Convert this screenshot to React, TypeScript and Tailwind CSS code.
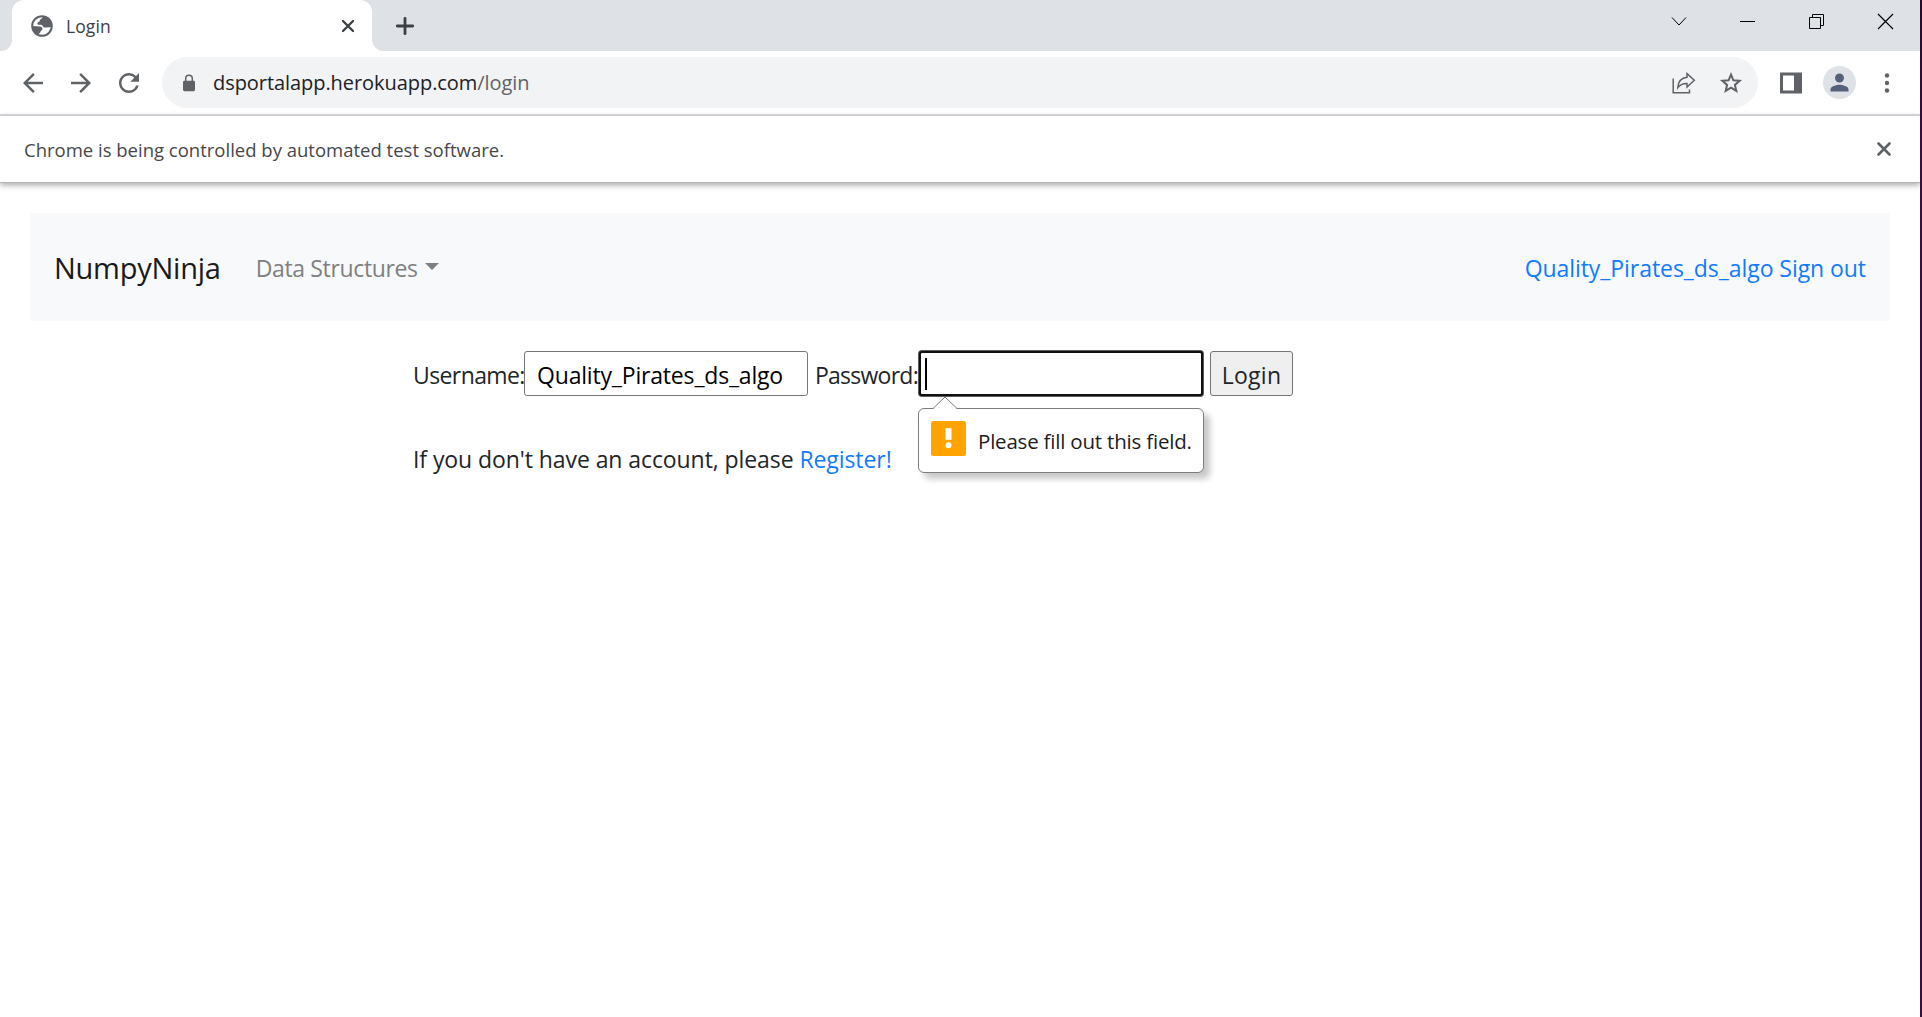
import type { ReactNode } from "react";
import { MdArrowBack, MdArrowForward, MdPerson, MdRefresh } from "react-icons/md";

function GlobeIcon() {
  return (
    <svg width="22" height="22" viewBox="0 0 22 22" className="shrink-0">
      <circle cx="11" cy="11" r="9.8" fill="#fff" stroke="#5f6368" strokeWidth="2" />
      <path
        d="M12 1.5 C11.5 3.5 9 4 8.8 5.6 C8.6 7.4 6.2 7 6.4 8.8 C6.5 10 8.5 9.7 10 9.8 C12 10 11.6 12.2 13.2 12.4 C15 12.6 17 12.4 20.6 12 C21.4 6 17.5 2 12 1.5 Z"
        fill="#5f6368"
      />
      <path
        d="M1.2 11 L8.6 11.4 C11 11.6 11.8 13 11.4 14.4 C11.2 15.4 9.8 15.2 9.6 16.6 C9.4 17.8 8.4 18 7.6 19.8 C3.5 18.4 1.2 15 1.2 11 Z"
        fill="#5f6368"
      />
    </svg>
  );
}

function LockIcon() {
  return (
    <svg width="18" height="18" viewBox="0 0 18 18" className="shrink-0">
      <rect x="3" y="6.8" width="12" height="10.4" rx="1.4" fill="#5f6368" />
      <path d="M5.7 7.5V4.6a3.3 3.3 0 0 1 6.6 0v2.9" fill="none" stroke="#5f6368" strokeWidth="1.5" />
    </svg>
  );
}

function ShareIcon() {
  return (
    <svg width="24" height="24" viewBox="0 0 24 24" fill="none" stroke="#5f6368" strokeWidth="1.5" className="shrink-0">
      <path d="M1.2 7.5V21.8H17.5V18.5" />
      <path d="M15 2.6L22.3 9.3L15 16V12.4C11 12.2 8.2 13.2 5.8 16.6C6.2 11 9 6.8 15 6.2Z" strokeLinejoin="miter" />
    </svg>
  );
}

function StarIcon() {
  return (
    <svg width="26" height="26" viewBox="0 0 26 26" fill="none" stroke="#5f6368" strokeWidth="2" className="ml-[22px] shrink-0">
      <path d="M13 4.6L15.4 10.3L21.6 10.8L16.9 14.9L18.3 20.9L13 17.7L7.7 20.9L9.1 14.9L4.4 10.8L10.6 10.3Z" />
    </svg>
  );
}

function SidePanelIcon() {
  return (
    <svg width="30" height="30" viewBox="0 0 30 30" className="shrink-0">
      <path fillRule="evenodd" d="M4 4.5H26V25.5H4ZM7 7.5V22.5H18V7.5Z" fill="#5f6368" />
    </svg>
  );
}

function MenuDots() {
  return (
    <svg width="30" height="30" viewBox="0 0 30 30" fill="#5f6368" className="shrink-0">
      <circle cx="15" cy="7.5" r="2.2" />
      <circle cx="15" cy="15" r="2.2" />
      <circle cx="15" cy="22.5" r="2.2" />
    </svg>
  );
}

function WindowButton({ children }: { children: ReactNode }) {
  return (
    <div className="flex h-[43px] w-[69px] items-center justify-center">
      <svg width="17" height="17" viewBox="0 0 17 17" fill="none" stroke="#000" strokeWidth="1">
        {children}
      </svg>
    </div>
  );
}

function TitleBar() {
  return (
    <div className="flex h-[51px] bg-[#dee1e6]">
      <div className="w-3 bg-white">
        <div className="h-full rounded-br-[11px] bg-[#dee1e6]" />
      </div>
      <div className="bg-[#dee1e6]">
        <div className="flex h-full w-[360px] items-center rounded-t-[12px] bg-white pr-3.5 pl-[19px]">
          <GlobeIcon />
          <span className="ml-[13px] flex-1 text-[17.5px] leading-6 tracking-[0.1px] text-[#3c4043]">Login</span>
          <svg width="20" height="20" viewBox="0 0 20 20" stroke="#3c4043" strokeWidth="2.3" strokeLinecap="round">
            <path d="M5 5L15 15M15 5L5 15" />
          </svg>
        </div>
      </div>
      <div className="flex-1 bg-white">
        <div className="flex h-full rounded-bl-[12px] bg-[#dee1e6]">
          <div className="flex w-[66px] items-center justify-center">
            <svg width="20" height="20" viewBox="0 0 20 20" stroke="#3c4043" strokeWidth="2.8" strokeLinecap="round">
              <path d="M10 2.3V17.7M2.3 10H17.7" />
            </svg>
          </div>
          <div className="ml-auto flex">
            <WindowButton>
              <path d="M2 4.5L9 12L16 4.5" />
            </WindowButton>
            <WindowButton>
              <path d="M1 8.5H16" />
            </WindowButton>
            <WindowButton>
              <path d="M1.5 4.5H12.5V15.5H1.5ZM4.5 4.5V1.5H15.5V12.5H12.5" />
            </WindowButton>
            <WindowButton>
              <path d="M1 1L16 16M16 1L1 16" strokeWidth="1.2" />
            </WindowButton>
          </div>
        </div>
      </div>
    </div>
  );
}

function Toolbar() {
  return (
    <div className="flex h-[65px] items-center gap-[18px] border-b-2 border-[#dadce0] bg-white px-[18px] text-[#5f6368]">
      <MdArrowBack size={30} className="shrink-0" />
      <MdArrowForward size={30} className="shrink-0" />
      <MdRefresh size={30} className="shrink-0" />
      <div className="flex h-[51px] flex-1 items-center rounded-full bg-[#f1f3f4] pr-3.5 pl-[18px]">
        <LockIcon />
        <span className="ml-[15px] flex-1 text-[20px] leading-7 tracking-[-0.06px] text-[#5f6368]">
          <span className="text-[#202124]">dsportalapp.herokuapp.com</span>/login
        </span>
        <ShareIcon />
        <StarIcon />
      </div>
      <SidePanelIcon />
      <div className="flex size-[30px] shrink-0 items-center justify-center">
        <div className="flex size-[33px] shrink-0 items-center justify-center rounded-full bg-[#dee1e6]">
          <MdPerson size={27} color="#55607a" />
        </div>
      </div>
      <MenuDots />
    </div>
  );
}

function InfoBar() {
  return (
    <div className="flex h-[67px] items-center border-b border-[#b4b6b6] bg-white px-6 shadow-[0_2px_6px_rgba(0,0,0,0.35)]">
      <span className="flex-1 pt-0.5 text-[18.5px] leading-6 text-[#46474a]">
        Chrome is being controlled by automated test software.
      </span>
      <svg width="24" height="24" viewBox="0 0 24 24" stroke="#5f6368" strokeWidth="2.6" strokeLinecap="round">
        <path d="M6.5 6.5L17.5 17.5M17.5 6.5L6.5 17.5" />
      </svg>
    </div>
  );
}

function ValidationBubble() {
  return (
    <div className="absolute top-[55px] -left-[3px] h-[65px] w-[286px] rounded-[6px] border border-[#7d7d7d] bg-white shadow-[6px_6px_6px_rgba(0,0,0,0.22)]">
      <svg width="26" height="14" viewBox="0 0 26 14" className="absolute -top-[13px] left-[13px]">
        <path d="M1 13L13 1L25 13V14H1Z" fill="#fff" />
        <path d="M1 12.5L13 1L25 12.5" fill="none" stroke="#7d7d7d" />
      </svg>
      <div className="flex h-full items-center pl-3">
        <svg width="35" height="35" viewBox="0 0 35 35" className="-mt-[5px] shrink-0">
          <rect width="35" height="35" rx="2.5" fill="#ffa300" />
          <rect x="14.5" y="7.2" width="6" height="11.6" fill="#fff" />
          <circle cx="17.5" cy="24.2" r="3" fill="#fff" />
        </svg>
        <span className="ml-3 text-[20.5px] leading-7 tracking-[-0.2px] whitespace-nowrap text-[#1c1c1c]">
          Please fill out this field.
        </span>
      </div>
    </div>
  );
}

function Page() {
  return (
    <main className="px-[30px] pt-[30px]">
      <nav className="flex h-[108px] items-center bg-[#f8f9fb] px-6 pt-0.5 text-[23px]">
        <span className="text-[29px] tracking-[-0.25px] text-[#1a1a1a]">NumpyNinja</span>
        <span className="ml-[35px] flex items-center pt-px tracking-[-0.35px] text-[#7f8080]">
          Data Structures
          <span className="-mt-1 ml-[7px] border-x-[7px] border-t-[7px] border-x-transparent border-t-[#7f8080]" />
        </span>
        <span className="ml-auto pt-px tracking-[-0.06px] text-[#107bff]">Quality_Pirates_ds_algo Sign out</span>
      </nav>
      <div className="mt-[30px] ml-[382px] text-[23px] leading-9 whitespace-nowrap text-[#212529]">
        <div className="flex h-[45px] items-center">
          <label className="w-28 pt-[3px] pl-px tracking-[-0.6px]">Username:</label>
          <div className="flex h-[45px] w-[284px] items-center rounded-[3px] border border-[#767676] bg-white pt-[3px] pl-3 tracking-[-0.18px] text-black">
            Quality_Pirates_ds_algo
          </div>
          <label className="ml-[7px] w-[104px] pt-[3px] tracking-[-0.75px]">Password:</label>
          <div className="relative h-[45px] w-[284px] rounded-[3px] border-2 border-[#101010] bg-white shadow-[0_0_0_1px_#5c5c5c]">
            <div className="mt-[5px] ml-1 h-8 w-0.5 bg-black" />
            <ValidationBubble />
          </div>
          <button className="ml-[7px] h-[45px] w-[83px] rounded-[3px] border border-[#767676] bg-[#efefef] pt-[3px] tracking-[0.3px]">
            Login
          </button>
        </div>
        <p className="mt-[45px] pl-px">
          <span className="tracking-[-0.08px]">If you don't have an account, please </span>
          <a className="tracking-[-0.08px] text-[#107bff]">Register!</a>
        </p>
      </div>
    </main>
  );
}

export default function App() {
  return (
    <div className="flex h-[1017px] w-[1922px] overflow-hidden bg-white font-['Open_Sans',sans-serif]">
      <div className="w-[1920px] shrink-0">
        <TitleBar />
        <Toolbar />
        <InfoBar />
        <Page />
      </div>
      <div className="w-0.5 bg-linear-to-b from-[#240a28] to-[#3b0d42] to-15%" />
    </div>
  );
}
